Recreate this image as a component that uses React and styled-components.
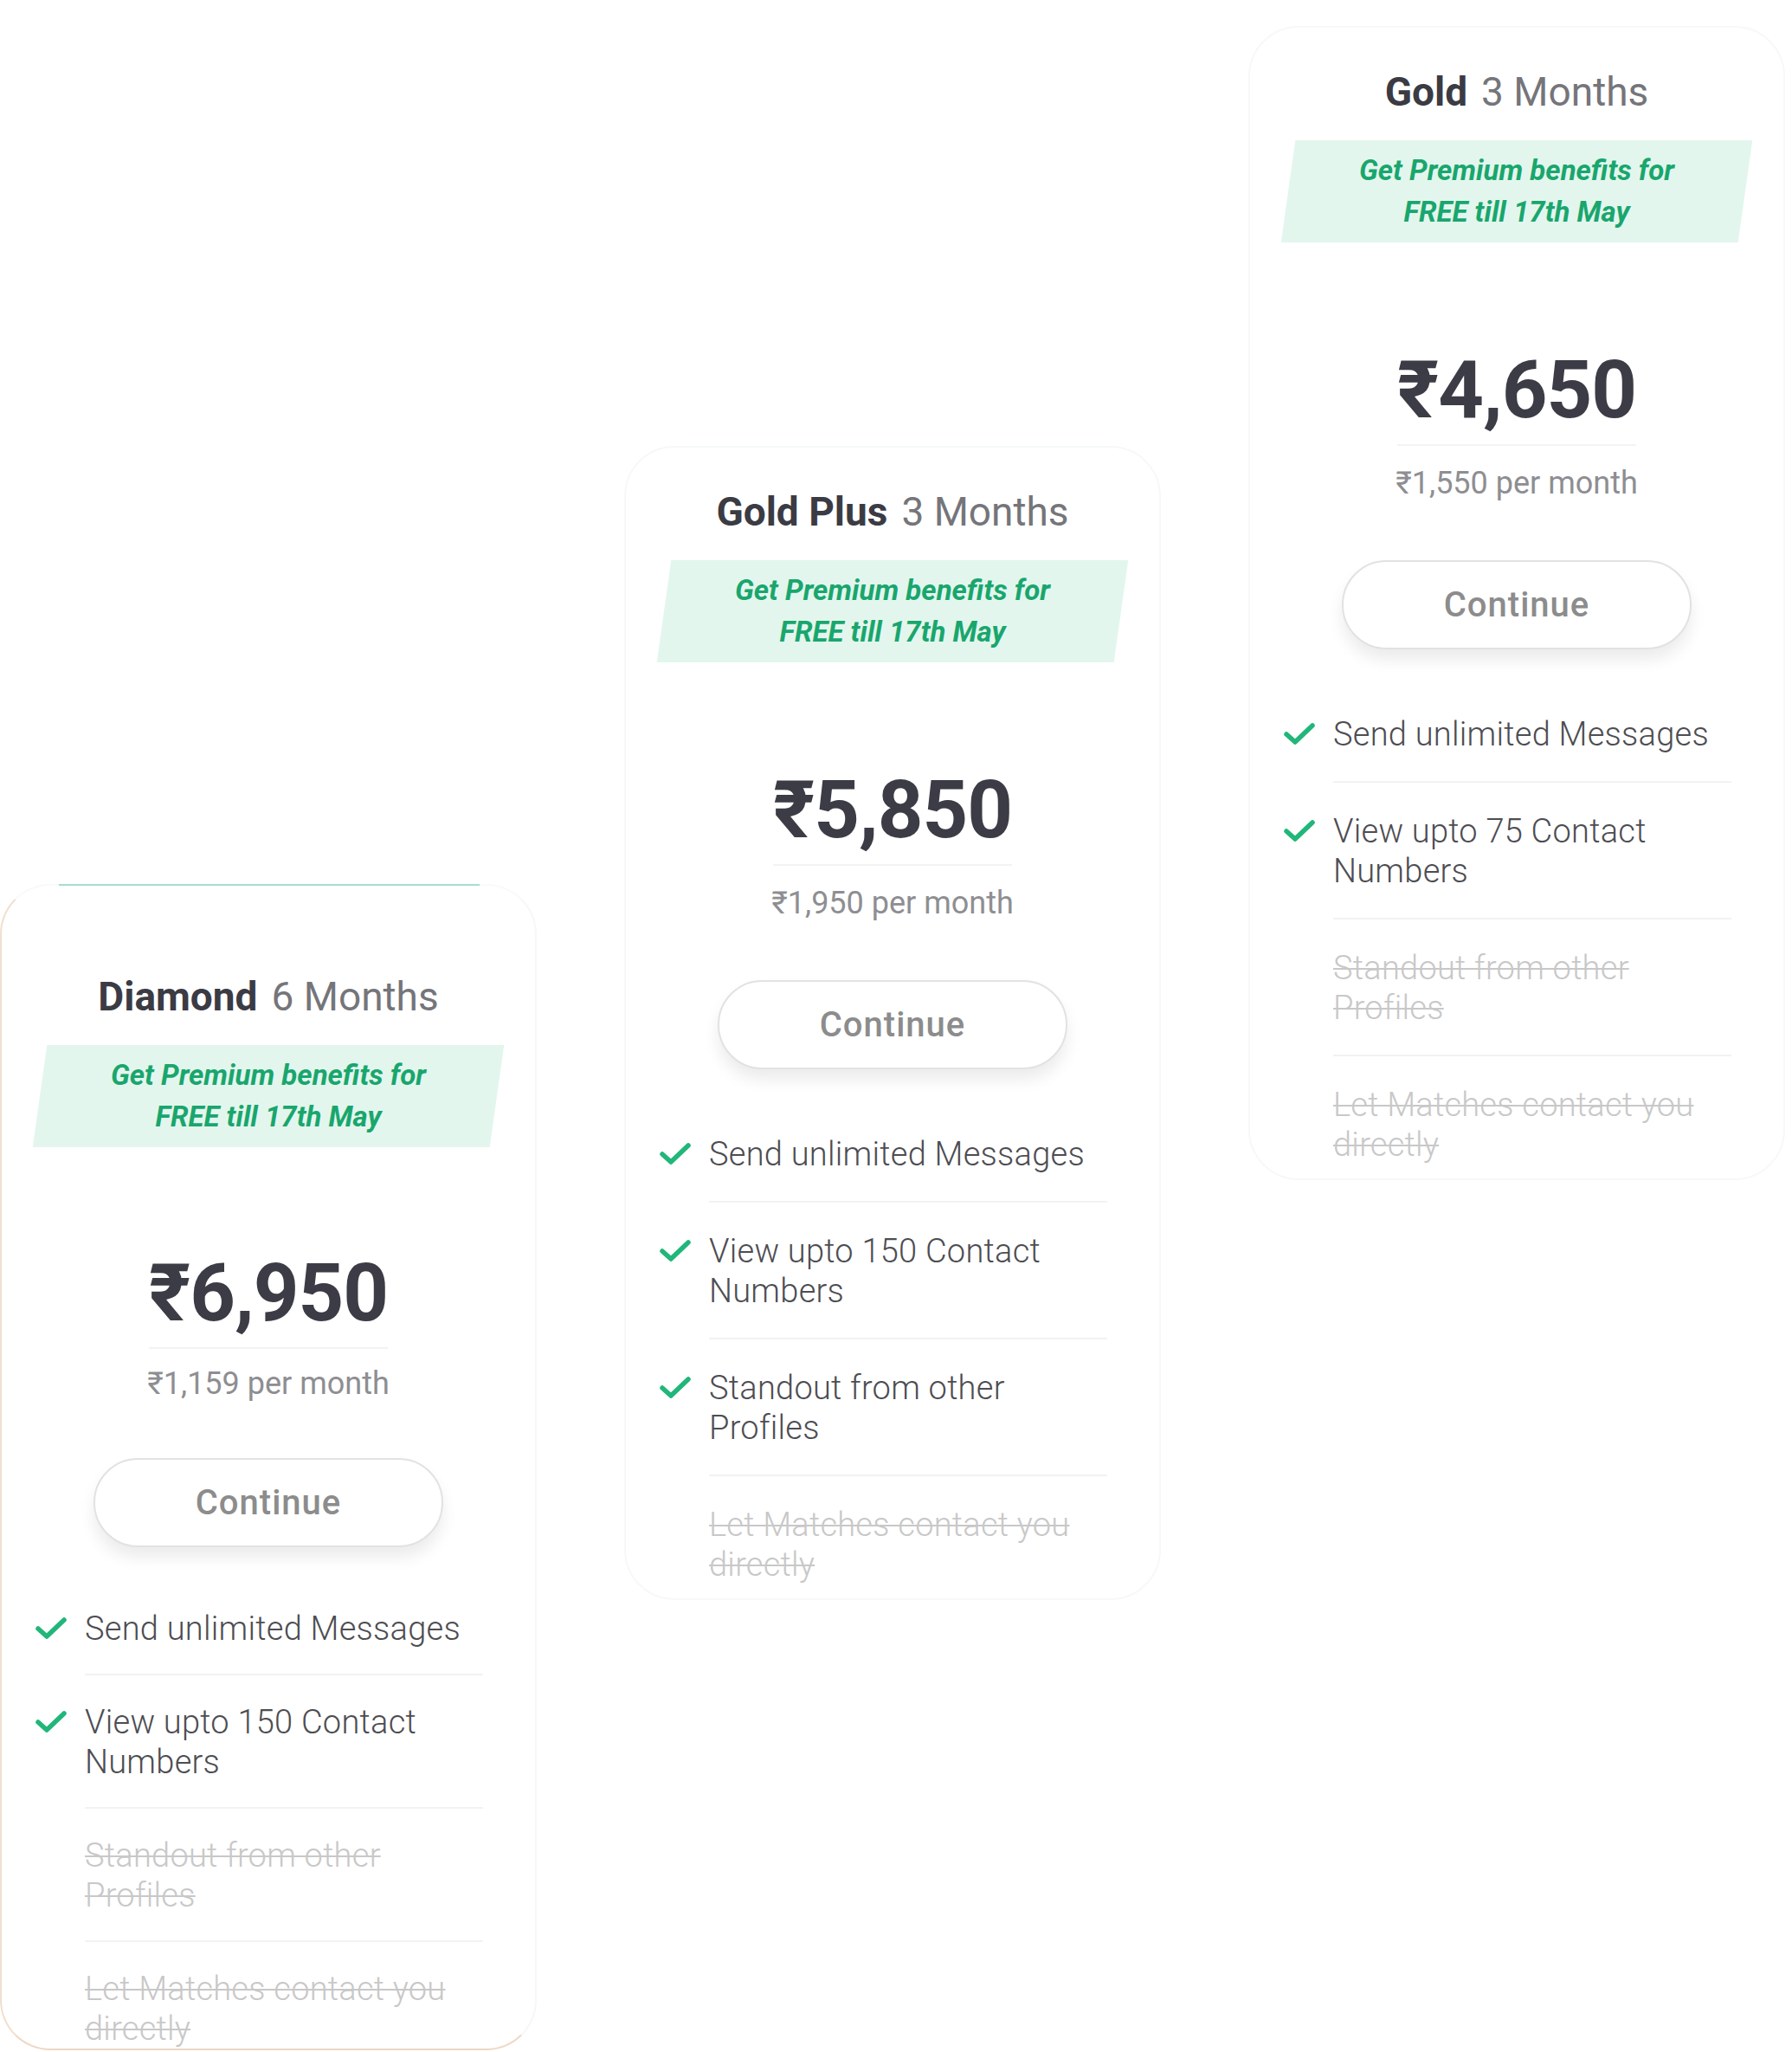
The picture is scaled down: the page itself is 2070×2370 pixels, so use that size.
import React from "react";
import styled, { createGlobalStyle, css } from "styled-components";

const GlobalStyle = createGlobalStyle`
  html, body {
    margin: 0;
    padding: 0;
    background: #ffffff;
  }
  body {
    font-family: Roboto, "Noto Sans", "DejaVu Sans", sans-serif;
    -webkit-font-smoothing: antialiased;
  }
  * { box-sizing: border-box; }
`;

const Page = styled.div`
  display: flex;
  align-items: flex-start;
  gap: 101px;
  width: 2070px;
  overflow: hidden;
`;

const Card = styled.section`
  position: relative;
  width: 620px;
  flex: none;
  display: flex;
  flex-direction: column;
  align-items: center;
  background: #ffffff;
  border-radius: 58px;
  border: 2px solid #f6f8f9;
  margin-top: ${(p) => p.$offset}px;
  padding: ${(p) => p.$padTop}px 0 ${(p) => p.$padBottom}px;

  ${(p) =>
    p.$featured &&
    css`
      border-left-color: #f1dfcf;
      border-bottom-color: #efd8c5;
      border-top-color: #f8fafa;
      border-right-color: #f6f7f7;
      &::before {
        content: "";
        position: absolute;
        top: -2px;
        left: 66px;
        right: 64px;
        height: 2px;
        background: #a7ddcf;
      }
    `}
`;

const Title = styled.h2`
  margin: 0;
  font-size: 46px;
  line-height: 56px;
  font-weight: 400;
  color: #75757a;
  white-space: nowrap;
`;

const PlanName = styled.span`
  font-weight: 700;
  color: #3b3b44;
  margin-right: 16px;
`;

const Banner = styled.div`
  position: relative;
  isolation: isolate;
  width: 528px;
  margin-top: 28px;
  padding: 11px 0;
  text-align: center;
  font-style: italic;
  font-weight: 700;
  font-size: 33px;
  line-height: 48px;
  color: #19a66d;

  &::before {
    content: "";
    position: absolute;
    inset: 0;
    background: #e3f6ee;
    transform: skewX(-8deg);
    z-index: -1;
  }
`;

const Price = styled.div`
  margin-top: ${(p) => (p.$compact ? 119 : 121)}px;
  padding-bottom: 12px;
  border-bottom: 2px solid #f3f3f3;
  font-size: 92px;
  line-height: 100px;
  font-weight: 700;
  color: #3c3c46;
  letter-spacing: -1px;
`;

const PerMonth = styled.div`
  margin-top: ${(p) => (p.$compact ? 18 : 21)}px;
  font-size: 36px;
  line-height: 44px;
  color: #8e8e92;
`;

const ContinueButton = styled.button`
  margin-top: ${(p) => (p.$compact ? 64 : 67)}px;
  width: 404px;
  height: 103px;
  border-radius: 52px;
  border: 2px solid #e2e2e2;
  background: #ffffff;
  box-shadow: 0 12px 18px rgba(0, 0, 0, 0.08);
  font-family: Roboto, "Noto Sans", sans-serif;
  font-size: 40px;
  font-weight: 500;
  letter-spacing: 1px;
  color: #8c8c8c;
  cursor: pointer;
`;

const FeatureList = styled.ul`
  list-style: none;
  margin: ${(p) => (p.$compact ? 40 : 42)}px 0 0;
  padding: 0;
  align-self: stretch;
`;

const FeatureRow = styled.li`
  display: flex;
  align-items: flex-start;
  gap: 20px;
  padding-left: 38px;
`;

const IconSlot = styled.span`
  flex: none;
  width: 38px;
  height: 46px;
  margin-top: ${(p) => (p.$compact ? 31 : 33)}px;
  display: flex;
  align-items: center;
  justify-content: center;
`;

const FeatureText = styled.span`
  flex: 1;
  margin-right: 60px;
  padding: ${(p) => (p.$compact ? "31px 0 29px" : "33px 0 31px")};
  font-size: 38px;
  line-height: 46px;
  letter-spacing: 0.25px;
  font-weight: 300;
  color: ${(p) => (p.$off ? "#c8c8c8" : "#4d4d52")};
  text-decoration: ${(p) => (p.$off ? "line-through" : "none")};
  text-decoration-thickness: 2px;
  border-bottom: ${(p) => (p.$last ? "none" : "2px solid #f2f2f2")};
  ${(p) => p.$last && "padding-bottom: 0;"}
`;

const Check = () => (
  <svg width="38" height="28" viewBox="0 0 38 28" fill="none">
    <polyline
      points="4,14 14,23 34,4"
      stroke="#21b67a"
      strokeWidth="5.5"
      strokeLinecap="round"
      strokeLinejoin="round"
    />
  </svg>
);

const FEATURES = [
  "Send unlimited Messages",
  "View upto {n} Contact Numbers",
  "Standout from other Profiles",
  "Let Matches contact you directly",
];

const PLANS = [
  {
    name: "Diamond",
    duration: "6 Months",
    price: "₹6,950",
    perMonth: "₹1,159 per month",
    contacts: 150,
    active: 2,
    offset: 1021,
    padTop: 100,
    padBottom: 0,
    featured: true,
    compact: true,
  },
  {
    name: "Gold Plus",
    duration: "3 Months",
    price: "₹5,850",
    perMonth: "₹1,950 per month",
    contacts: 150,
    active: 3,
    offset: 515,
    padTop: 46,
    padBottom: 16,
  },
  {
    name: "Gold",
    duration: "3 Months",
    price: "₹4,650",
    perMonth: "₹1,550 per month",
    contacts: 75,
    active: 2,
    offset: 30,
    padTop: 46,
    padBottom: 16,
  },
];

function PlanCard({ plan }) {
  return (
    <Card
      $offset={plan.offset}
      $padTop={plan.padTop}
      $padBottom={plan.padBottom}
      $featured={plan.featured}
    >
      <Title>
        <PlanName>{plan.name}</PlanName>
        {plan.duration}
      </Title>
      <Banner>
        Get Premium benefits for
        <br />
        FREE till 17th May
      </Banner>
      <Price $compact={plan.compact}>{plan.price}</Price>
      <PerMonth $compact={plan.compact}>{plan.perMonth}</PerMonth>
      <ContinueButton $compact={plan.compact}>Continue</ContinueButton>
      <FeatureList $compact={plan.compact}>
        {FEATURES.map((f, i) => {
          const on = i < plan.active;
          return (
            <FeatureRow key={i}>
              <IconSlot $compact={plan.compact}>{on ? <Check /> : null}</IconSlot>
              <FeatureText
                $compact={plan.compact}
                $off={!on}
                $last={i === FEATURES.length - 1}
              >
                {f.replace("{n}", plan.contacts)}
              </FeatureText>
            </FeatureRow>
          );
        })}
      </FeatureList>
    </Card>
  );
}

export default function App() {
  return (
    <>
      <GlobalStyle />
      <Page>
        {PLANS.map((p) => (
          <PlanCard key={p.name} plan={p} />
        ))}
      </Page>
    </>
  );
}
